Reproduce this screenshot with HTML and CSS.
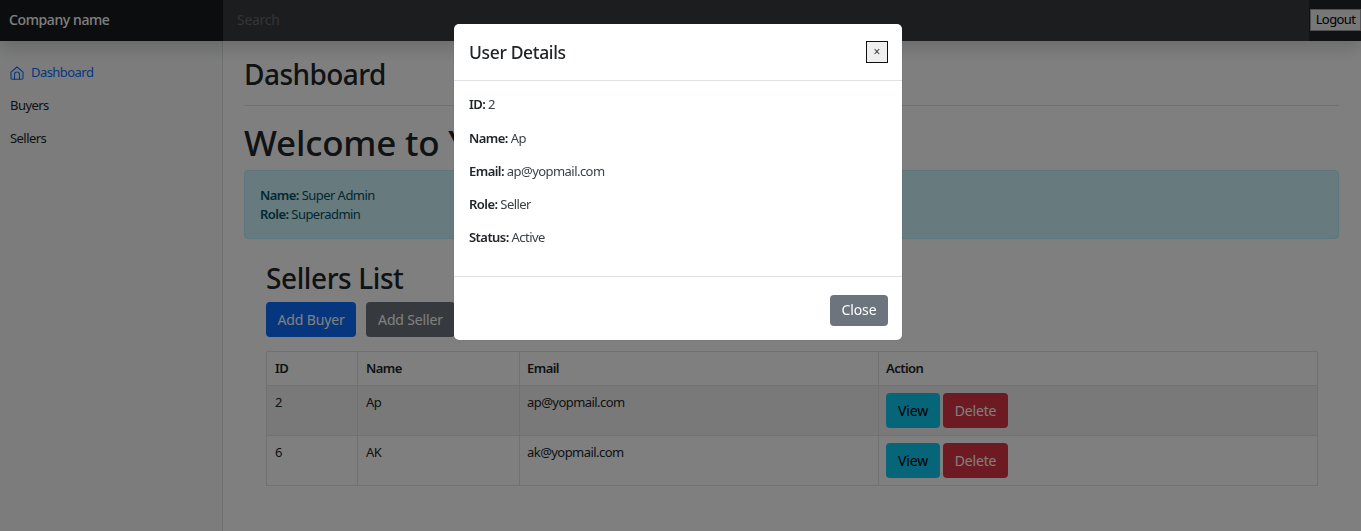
FILE: index.html
```html
<!DOCTYPE html>
<html lang="en">
<head>
    <meta charset="UTF-8">
    <title>Dashboard</title>
    <link rel="stylesheet" href="styles.css">
</head>
<body>

<header class="topbar">
    <a class="brand">Company name</a>
    <input class="search" type="text" placeholder="Search">
    <div class="logout-wrap">
        <button class="logout">Logout</button>
    </div>
</header>

<div class="layout">
    <nav class="sidebar">
        <ul>
            <li class="active">
                <svg class="home-icon" viewBox="0 0 14 14" width="14" height="14" fill="none" stroke="currentColor" stroke-width="1.1" stroke-linejoin="round" stroke-linecap="round">
                    <path d="M1 6.2 7 1l6 5.2v5.9a1.2 1.2 0 0 1-1.2 1.2H2.2A1.2 1.2 0 0 1 1 12.100z"/>
                    <path d="M4.500 13.300V8.500a2.500 2.500 0 0 1 5 0v4.800"/>
                </svg>
                Dashboard
            </li>
            <li>Buyers</li>
            <li>Sellers</li>
        </ul>
    </nav>

    <main class="main">
        <h2 class="page-title">Dashboard</h2>
        <h1 class="welcome">Welcome to Y</h1>
        <div class="alert">
            <div><b>Name:</b> Super Admin</div>
            <div><b>Role:</b> Superadmin</div>
        </div>

        <section class="sellers">
            <h2 class="list-title">Sellers List</h2>
            <div class="list-actions">
                <button class="btn btn-blue">Add Buyer</button>
                <button class="btn btn-gray">Add Seller</button>
            </div>
            <table class="list">
                <thead>
                    <tr>
                        <th class="col-id">ID</th>
                        <th class="col-name">Name</th>
                        <th class="col-email">Email</th>
                        <th>Action</th>
                    </tr>
                </thead>
                <tbody>
                    <tr class="striped">
                        <td>2</td>
                        <td>Ap</td>
                        <td>ap@yopmail.com</td>
                        <td><button class="btn btn-cyan">View</button><button class="btn btn-red">Delete</button></td>
                    </tr>
                    <tr>
                        <td>6</td>
                        <td>AK</td>
                        <td>ak@yopmail.com</td>
                        <td><button class="btn btn-cyan">View</button><button class="btn btn-red">Delete</button></td>
                    </tr>
                </tbody>
            </table>
        </section>
    </main>
</div>

<div class="backdrop"></div>

<div class="modal">
    <div class="modal-head">
        <h5>User Details</h5>
        <button class="modal-x">&times;</button>
    </div>
    <div class="modal-body">
        <p><b>ID:</b> 2</p>
        <p><b>Name:</b> Ap</p>
        <p><b>Email:</b> ap@yopmail.com</p>
        <p><b>Role:</b> Seller</p>
        <p><b>Status:</b> Active</p>
    </div>
    <div class="modal-foot">
        <button class="btn btn-close">Close</button>
    </div>
</div>

</body>
</html>
```

FILE: styles.css
```css
*{
    margin: 0;
    padding: 0;
    box-sizing: border-box;
}
ul, ol{
    list-style: none;
}
html, body{
    height: 100%;
    overflow: hidden;
}
body{
    font-family: "Noto Sans", "Open Sans", sans-serif;
    font-size: 13px;
    line-height: 19px;
    letter-spacing: -.55px;
    color: #212529;
    background: #fff;
}
b, th{
    font-weight: 600;
}

.topbar{
    display: flex;
    height: 41px;
    background: #212529;
    box-shadow: 0 8px 16px rgba(0,0,0,.15);
    position: relative;
}
.brand{
    width: 223px;
    padding: 0 9px;
    line-height: 40px;
    font-size: 14px;
    font-weight: 500;
    letter-spacing: -.4px;
    color: #fff;
    background: rgba(0,0,0,.25);
}
.search{
    flex: 1;
    padding: 0 14px 2px;
    border: 0;
    font: inherit;
    font-size: 14px;
    letter-spacing: -.3px;
    background: rgba(255,255,255,.1);
    outline: none;
}
.search::placeholder{
    color: rgba(255,255,255,.25);
}
.logout-wrap{
    width: 52px;
    padding: 9px 0 0 1px;
}
.logout{
    display: block;
    width: 51px;
    height: 22px;
    padding-bottom: 2px;
    border: 1px solid #a0a0a0;
    background: #efefef;
    color: #000;
    font: inherit;
    font-size: 13px;
    letter-spacing: -.6px;
}

.layout{
    display: flex;
    height: 490px;
}
.sidebar{
    width: 223px;
    padding-top: 15px;
    border-right: 1px solid #dee0e2;
    background: #f8f9fa;
}
.sidebar li{
    display: flex;
    align-items: center;
    height: 33px;
    padding-left: 10px;
}
.sidebar .active{
    color: #0d6efd;
}
.home-icon{
    margin-right: 7px;
}

.main{
    flex: 1;
    min-width: 0;
    padding: 0 22px 0 21px;
}
.page-title{
    height: 65px;
    padding-top: 14px;
    border-bottom: 1px solid #dee2e6;
    font-size: 28px;
    line-height: 38px;
    font-weight: 500;
}
.welcome{
    height: 64px;
    padding-top: 15px;
    font-size: 35px;
    line-height: 44px;
    font-weight: 500;
    letter-spacing: -.2px;
    white-space: nowrap;
}
.alert{
    height: 69px;
    padding: 15px;
    border: 1px solid #b6effb;
    border-radius: 4px;
    background: #cff4fc;
    color: #055160;
}
.sellers{
    padding: 0 21px 0 22px;
}
.list-title{
    height: 63px;
    padding-top: 20px;
    font-size: 28px;
    line-height: 38px;
    font-weight: 500;
    letter-spacing: -.4px;
}
.list-actions{
    display: flex;
    gap: 10px;
    height: 49px;
}
.btn{
    height: 35px;
    padding: 0;
    border: 1px solid transparent;
    border-radius: 4px;
    font: inherit;
    font-size: 14px;
    letter-spacing: -.15px;
    white-space: nowrap;
}
.btn-blue{
    width: 90px;
    background: #0d6efd;
    color: #fff;
}
.btn-gray{
    width: 89px;
    background: #6c757d;
    color: #fff;
}
.btn-cyan{
    width: 54px;
    margin-right: 3px;
    background: #0dcaf0;
    color: #000;
}
.btn-red{
    width: 65px;
    background: #dc3545;
    color: #fff;
}

.list{
    width: 100%;
    table-layout: fixed;
    border-collapse: collapse;
}
.list th, .list td{
    height: 34px;
    padding: 7px;
    border: 1px solid #dee2e6;
    text-align: left;
    vertical-align: top;
}
.list td{
    height: 50px;
}
.list th:nth-child(-n+2), .list td:nth-child(-n+2){
    padding-left: 8px;
}
.list .striped td{
    background: rgba(0,0,0,.05);
}
.col-id{
    width: 91px;
}
.col-name{
    width: 162px;
}
.col-email{
    width: 359px;
}

.backdrop{
    position: fixed;
    left: 0;
    top: 0;
    width: 100%;
    height: 100%;
    background: rgba(0,0,0,.5);
}

.modal{
    position: fixed;
    left: 454px;
    top: 24px;
    width: 448px;
    height: 316px;
    display: flex;
    flex-direction: column;
    border-radius: 5px;
    background: #fff;
    box-shadow: 0 0 1px rgba(0,0,0,.4);
}
.modal-head{
    display: flex;
    align-items: center;
    justify-content: space-between;
    height: 57px;
    padding: 0 14px 0 15px;
    border-bottom: 1px solid #dee2e6;
}
.modal-head h5{
    font-size: 17.500px;
    line-height: 24px;
    font-weight: 500;
    letter-spacing: -.35px;
}
.modal-x{
    width: 22px;
    height: 22px;
    border: 1px solid #111;
    background: #efefef;
    color: #333;
    font: inherit;
    font-size: 12px;
    line-height: 18px;
}
.modal-body{
    height: 195px;
    padding: 14.450px 15px;
    color: #3c4146;
}
.modal-body b{
    color: #212529;
}
.modal-body p{
    margin-bottom: 14.100px;
}
.modal-foot{
    display: flex;
    justify-content: flex-end;
    padding: 18px 14px 0;
    border-top: 1px solid #dee2e6;
    flex: 1;
}
.btn-close{
    width: 58px;
    height: 31px;
    padding-bottom: 2px;
    background: #6c757d;
    color: #fff;
}
```
